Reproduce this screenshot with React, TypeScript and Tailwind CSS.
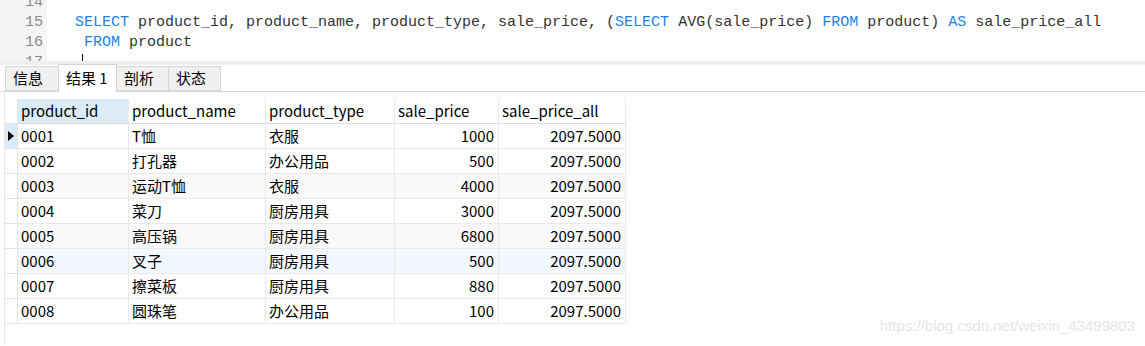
const rows = [
  ["0001", "T恤", "衣服", "1000"],
  ["0002", "打孔器", "办公用品", "500"],
  ["0003", "运动T恤", "衣服", "4000"],
  ["0004", "菜刀", "厨房用具", "3000"],
  ["0005", "高压锅", "厨房用具", "6800"],
  ["0006", "叉子", "厨房用具", "500"],
  ["0007", "擦菜板", "厨房用具", "880"],
  ["0008", "圆珠笔", "办公用品", "100"],
];

const kw = "text-[#1e7fe6]";

function Editor() {
  return (
    <div className="flex h-[61px] overflow-hidden font-['Liberation_Mono',monospace] text-[15px] leading-[20px] text-[#333]">
      <div className="w-[47px] h-[61px] overflow-hidden bg-[#f5f5f5] pr-[4px] text-right text-[#8a8a8a]">
        <div className="-mt-[7px]">
          <div>14</div>
          <div>15</div>
          <div>16</div>
          <div className="h-[8px] overflow-hidden">17</div>
        </div>
      </div>
      <div className="pl-[28px] h-[61px] overflow-hidden whitespace-pre">
        <div className="-mt-[7px]">
          <div>&nbsp;</div>
          <div>
            <span className={kw}>SELECT</span> product_id, product_name, product_type, sale_price, (
            <span className={kw}>SELECT</span> AVG(sale_price) <span className={kw}>FROM</span> product){" "}
            <span className={kw}>AS</span> sale_price_all
          </div>
          <div>
            {" "}
            <span className={kw}>FROM</span> product
          </div>
          <div className="pl-[7px] pt-[1px]">
            <div className="w-px h-[20px] bg-black" />
          </div>
        </div>
      </div>
    </div>
  );
}

function Tabs() {
  const tab = "h-[25px] px-[7px] border border-[#d6d6d6] bg-[#f0f0f0] flex items-center -ml-px";
  return (
    <div className="h-[31px] bg-white border-t-[4px] border-[#efefef] flex items-end pl-[5px] border-b border-b-[#d9d9d9] font-['Noto_Sans_CJK_SC',sans-serif] text-[15px] text-black">
      <div className={`${tab} w-[54px] ml-0`}>信息</div>
      <div className="h-[28px] w-[59px] -ml-px -mb-px border border-b-0 border-[#d6d6d6] bg-white flex items-center px-[7px]">
        结果 1
      </div>
      <div className={`${tab} w-[53px]`}>剖析</div>
      <div className={`${tab} w-[53px]`}>状态</div>
    </div>
  );
}

function Grid() {
  const cell = "h-[25px] border-r border-b border-[#e9e9e9] flex items-center px-[3px] whitespace-nowrap";
  const widths = ["w-[111px]", "w-[137px]", "w-[129px]", "w-[104px]", "w-[127px]"];
  const headers = ["product_id", "product_name", "product_type", "sale_price", "sale_price_all"];
  return (
    <div className="ml-[4px] border-l border-[#e4e4e4] pt-[7px] h-[253px] font-['Noto_Sans_CJK_SC',sans-serif] text-[15px] text-black">
      <div className="flex w-fit">
        <div className="w-[13px] h-[25px] border-r border-b border-[#e2e2e2]" />
        {headers.map((h, i) => (
          <div
            key={h}
            className={`${cell} ${widths[i]} border-b-[#dcdcdc] ${i === 0 ? "bg-[#dcebf8]" : "bg-white"}`}
          >
            {h}
          </div>
        ))}
      </div>
      {rows.map((r, ri) => {
        const bg = ri === 5 ? "bg-[#f2f8fd]" : ri === 2 || ri === 4 ? "bg-[#f9f9f9]" : "bg-white";
        return (
          <div key={r[0]} className={`flex w-fit ${bg}`}>
            <div
              className={`w-[13px] h-[25px] border-r border-b border-[#e2e2e2] flex items-center justify-center ${
                ri === 0 ? "bg-[#dcebf8]" : "bg-white"
              }`}
            >
              {ri === 0 && (
                <svg width="6" height="10" viewBox="0 0 6 10">
                  <path d="M0 0 L6 5 L0 10 Z" fill="#000" />
                </svg>
              )}
            </div>
            <div className={`${cell} ${widths[0]}`}>{r[0]}</div>
            <div className={`${cell} ${widths[1]}`}>{r[1]}</div>
            <div className={`${cell} ${widths[2]}`}>{r[2]}</div>
            <div className={`${cell} ${widths[3]} justify-end pr-[4px]`}>{r[3]}</div>
            <div className={`${cell} ${widths[4]} justify-end pr-[4px]`}>2097.5000</div>
          </div>
        );
      })}
    </div>
  );
}

export default function App() {
  return (
    <div className="w-[1145px] h-[346px] bg-white overflow-hidden relative">
      <Editor />
      <Tabs />
      <Grid />
      <div className="absolute right-[10px] bottom-[9px] font-['Liberation_Sans',sans-serif] text-[15px] text-[#e6e6e6]">
        https://blog.csdn.net/weixin_43499803
      </div>
    </div>
  );
}
